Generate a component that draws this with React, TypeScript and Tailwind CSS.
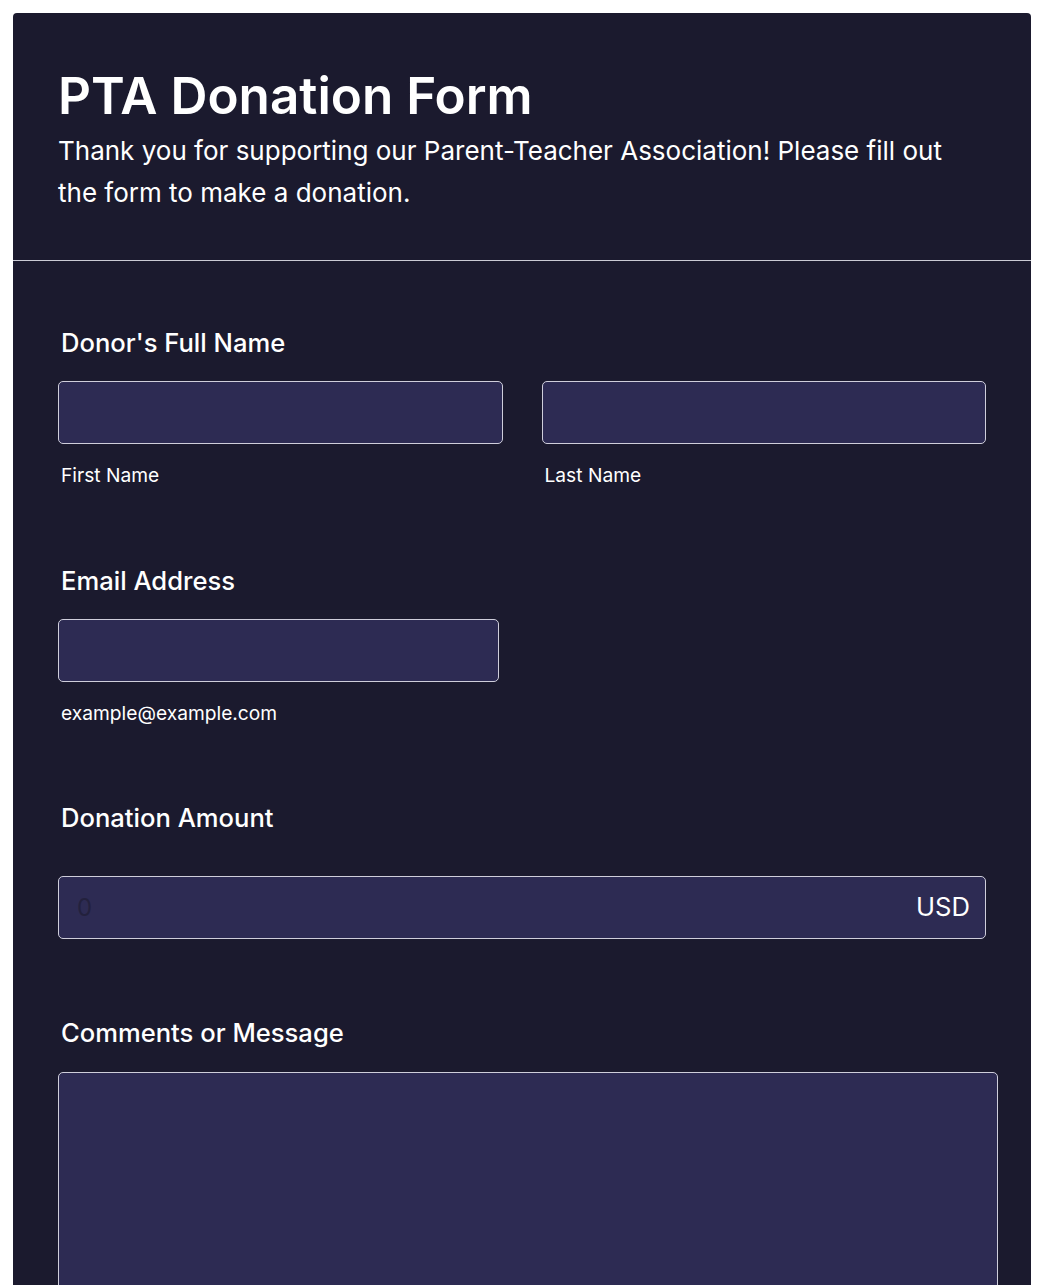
import React from 'react'

const font = { fontFamily: 'Inter, "Noto Sans", sans-serif' }

function Label({ children }: { children: React.ReactNode }) {
  return <div className="pl-[3px] text-[25.6px] leading-[36px] font-medium text-white">{children}</div>
}

function Sub({ children }: { children: React.ReactNode }) {
  return <div className="mt-[18px] pl-[3px] text-[19.2px] leading-[27px] text-white">{children}</div>
}

const inputCls =
  'h-[63px] w-full rounded-[5px] border border-[#cfcedb] bg-[#2d2b53] px-4 text-[24px] text-white outline-none'

export default function App() {
  return (
    <div className="min-h-screen bg-white p-[13px]" style={font}>
      <div className="rounded-[4px] bg-[#1b1a2e] pb-10">
        {/* Header */}
        <div className="border-b border-[#cbcbd5] px-[45px] pt-[53px] pb-[46px]">
          <h1 className="text-[51.2px] leading-[58px] font-semibold text-white">PTA Donation Form</h1>
          <p className="mt-[6px] max-w-[905px] text-[26px] leading-[42px] text-white">
            Thank you for supporting our Parent-Teacher Association! Please fill out the form to make a donation.
          </p>
        </div>

        <div className="px-[45px] pt-[64px]">
          {/* Full name */}
          <Label>Donor's Full Name</Label>
          <div className="mt-5 grid w-[928px] grid-cols-2 gap-[39px]">
            <div>
              <input className={inputCls} />
              <Sub>First Name</Sub>
            </div>
            <div>
              <input className={inputCls} />
              <Sub>Last Name</Sub>
            </div>
          </div>

          {/* Email */}
          <div className="mt-[74px]">
            <Label>Email Address</Label>
            <input className={inputCls + ' mt-5 !w-[441px]'} />
            <Sub>example@example.com</Sub>
          </div>

          {/* Amount */}
          <div className="mt-[73px]">
            <Label>Donation Amount</Label>
            <div className="mt-10 flex h-[63px] w-[928px] items-center justify-between rounded-[5px] border border-[#cfcedb] bg-[#2d2b53] pr-[15px] pl-[18px]">
              <span className="text-[24px] text-[#23213d]">0</span>
              <span className="text-[25.6px] text-white">USD</span>
            </div>
          </div>

          {/* Comments */}
          <div className="mt-[76px]">
            <Label>Comments or Message</Label>
            <textarea className="mt-[21px] block h-[240px] w-[940px] resize-none rounded-[5px] border border-[#cfcedb] bg-[#2d2b53] p-4 text-[24px] text-white outline-none" />
          </div>
        </div>
      </div>
    </div>
  )
}
